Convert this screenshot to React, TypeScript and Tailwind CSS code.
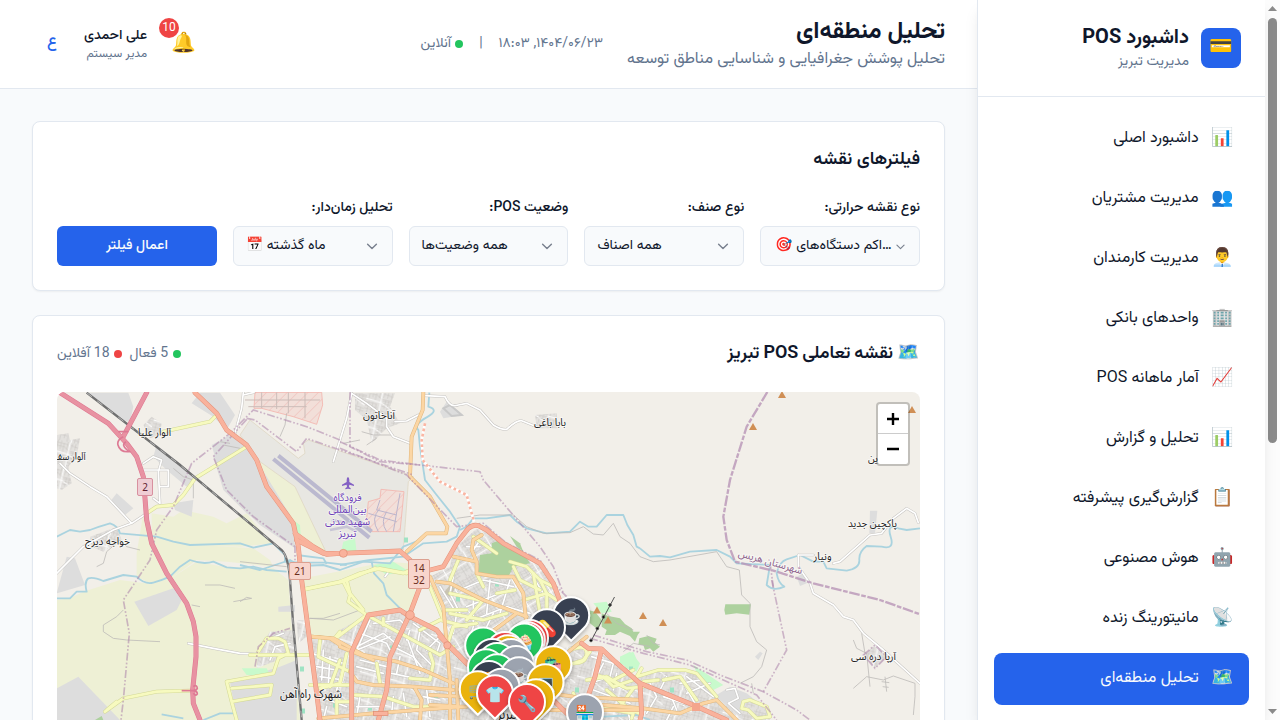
import React from "react";

const FONT = "font-['Vazirmatn','Roboto','Noto_Sans_Arabic','Noto_Sans',sans-serif]";

const NAV = [
  { icon: "📊", label: "داشبورد اصلی" },
  { icon: "👥", label: "مدیریت مشتریان" },
  { icon: "👨‍💼", label: "مدیریت کارمندان" },
  { icon: "🏢", label: "واحدهای بانکی" },
  { icon: "📈", label: "آمار ماهانه POS" },
  { icon: "📊", label: "تحلیل و گزارش" },
  { icon: "📋", label: "گزارش‌گیری پیشرفته" },
  { icon: "🤖", label: "هوش مصنوعی" },
  { icon: "📡", label: "مانیتورینگ زنده" },
  { icon: "🗺️", label: "تحلیل منطقه‌ای", active: true },
];

function Chevron({ small }: { small?: boolean }) {
  return (
    <svg className={`shrink-0 text-gray-500/90 ${small ? "mr-[1px] h-[13px] w-[13px]" : "h-4 w-4"}`} viewBox="0 0 16 16" fill="none" stroke="currentColor" strokeWidth="1.4" strokeLinecap="round" strokeLinejoin="round">
      <path d="M3.6 6.2l4.4 4.4L12.4 6.2" />
    </svg>
  );
}

function Select({ label, icon, value, truncated }: { label: string; icon?: string; value: string; truncated?: boolean }) {
  return (
    <div>
      <div className="mb-2 h-5 text-sm font-medium leading-5 text-slate-900">{label}</div>
      <div className={`flex h-10 items-center justify-between rounded-md border border-slate-200 bg-slate-50 text-sm text-slate-900 ${truncated ? "pl-[14px] pr-[11px]" : "px-3"}`}>
        <Chevron small={truncated} />
        <span className="flex items-center gap-1 whitespace-nowrap leading-5">
          <span>{value}</span>
          {icon && <span>{icon}</span>}
        </span>
      </div>
    </div>
  );
}

/* Local frames of the map sheets: every sheet is drawn at three times its size. */
const SHEETS: Record<string, string> = {
  A: "translate(40 380) scale(0.33333)",
  B: "translate(340 380) scale(0.33333)",
  C: "translate(640 300) scale(0.33333)",
  D: "translate(240 540) scale(0.33333)",
  E: "translate(570 580) scale(0.33333)",
  F: "translate(180 385) scale(0.33333)",
};

type Piece = [string, string];

const FARM: Piece[] = [
  ["A", "M335 400L400 410 430 390 520 410 560 430 620 400 660 450 700 490 600 500 450 495 335 480Z"],
  ["A", "M310 400L345 470 480 495 640 505 690 540 700 560 560 545 470 540 400 590 330 610 290 590 290 520Z"],
  ["A", "M335 612L400 590 470 545 560 562 700 565 745 600 755 740 780 1020 50 1020 50 660 90 655 130 635 240 600Z"],
  ["D", "M190 115L330 88 440 65 505 70 530 100 520 215 385 225 330 270 290 300 205 290Z"],
  ["F", "M240 230L345 305 440 500 400 500 350 440 270 320Z"],
];
const GRAY: Piece[] = [
  ["A", "M145 38L265 38 280 80 270 125 240 120Z"],
  ["A", "M480 38L540 38 585 105 560 150 520 110 455 70Z"],
  ["A", "M520 230L540 190 610 205 640 240 690 340 760 430 765 500 700 460 620 400 550 330Z"],
  ["A", "M350 195L420 250 465 295 440 320 380 270 340 230Z"],
  ["A", "M230 340L280 385 255 405 210 365Z"],
  ["A", "M400 370L460 360 455 410 405 390Z"],
  ["A", "M283 665L400 625 430 650 410 690 325 738Z"],
  ["A", "M50 925L115 890 240 1020 50 1020Z"],
  ["A", "M80 530L105 535 135 615 50 640Z"],
  ["A", "M570 905L720 860 770 840 770 1020 590 1020Z"],
  ["A", "M715 680L765 675 765 695 715 695Z"],
  ["F", "M95 180L150 150 210 185 245 250 330 390 345 490 240 420 130 310Z"],
  ["B", "M300 95L320 65 370 105 310 115Z"],
  ["C", "M690 632L712 632 705 700 688 700Z"],
  ["E", "M440 345L480 320 530 340 580 380 600 420 520 420 450 360Z"],
  ["E", "M555 230L570 215 578 220 565 240Z"],
  ["C", "M470 830L490 820 500 850 480 858Z"],
];
const AIRPORT: Piece[] = [
  ["F", "M210 105L355 220 375 205 370 175 385 165 700 275 685 290 670 495 440 505 345 305 240 230 180 150Z"],
];
const TOWN: Piece[] = [
  ["A", "M50 165L85 160 90 180 120 175 110 230 85 260 95 310 65 330 50 325Z"],
  ["A", "M310 135L335 110 365 130 360 165 330 175Z"],
  ["A", "M150 470L230 440 245 480 190 515 155 500Z"],
  ["B", "M45 40L165 40 150 80 180 130 140 145 95 190 80 120 45 90Z"],
  ["C", "M670 1065L705 1035 740 1070 705 1105Z"],
  ["B", "M585 105L650 100 655 145 590 145Z"],
  ["A", "M690 755L765 750 770 810 740 830 650 865 655 810Z"],
  ["A", "M770 720L795 720 800 770 775 790Z"],
  ["D", "M210 290L290 300 330 275 385 225 500 210 520 250 610 280 680 370 690 540 235 540Z"],
  ["B", "M0 750L90 700 200 700 300 760 380 860 560 840 720 790 800 830 900 920 900 1020 0 1020Z"],
  ["E", "M90 220L200 290 280 270 380 280 440 345 450 360 520 420 0 420 0 200Z"],
  ["E", "M510 390L540 360 590 385 600 420 520 420Z"],
];
const TOWN_NORTH: Piece[] = [
  ["B", "M340 510L410 445 530 500 620 560 660 660 560 720 450 800 380 860 340 820 300 650 270 590 330 560Z"],
];
const GREEN: Piece[] = [
  ["B", "M455 490L480 480 500 500 550 520 570 550 520 560 505 590 415 580 420 525 455 520Z"],
  ["B", "M510 468L540 490 550 515 530 500Z"],
  ["C", "M256 913L333 913 328 944 290 940 256 944 253 930Z"],
  ["E", "M95 100L115 108 150 115 165 132 185 145 190 155 210 155 203 165 195 185 180 168 150 155 135 165 105 165 110 150 95 140Z"],
  ["E", "M208 175L235 168 260 176 255 188 270 200 250 215 240 205 225 210 220 195 205 195Z"],
  ["E", "M55 90L75 95 95 120 85 150 60 130Z"],
  ["A", "M165 1020L185 1008 190 1020Z"],
];
const PARK: Piece[] = [
  ["E", "M370 255L460 315 430 330 385 290Z"],
  ["E", "M150 230L180 215 210 250 200 275 150 250Z"],
  ["E", "M70 70L110 65 125 95 95 100Z"],
  ["D", "M400 75L460 65 500 90 440 105Z"],
  ["A", "M605 865L680 865 690 885 620 885Z"],
  ["F", "M490 470L525 460 530 500 480 515Z"],
  ["F", "M330 400L360 420 362 450 350 440Z"],
  ["B", "M840 830L880 815 895 850 860 870Z"],
];
const SPOTS: [number, number][] = [[302, 669], [335, 705], [370, 708], [458, 599], [406, 540], [497, 584], [556, 614], [631, 669], [577, 690], [392, 648], [303, 711], [672, 690], [620, 700], [436, 696]];
const MILITARY: Piece[] = [
  ["F", "M225 22L425 22 428 60 410 118 340 95 245 70 222 70Z"],
  ["F", "M603 313L672 320 660 440 575 440 560 400 565 350 600 340Z"],
];
const WATER: Piece[] = [
  ["A", "M50 470L90 450 120 455 150 450Q175 440 210 430Q235 438 240 460L350 470 400 485 450 495 600 490 640 503 700 490 735 525 735 545 780 548 860 548 920 555"],
  ["A", "M50 655L90 655Q105 640 110 635L140 635Q132 605 145 595Q160 590 190 603L250 585 290 590Q315 615 340 608T390 590L420 560 450 540Q490 555 520 545L560 562 600 565 640 560 680 570 740 575"],
  ["A", "M365 1003L430 1015 M490 1020L540 1000 590 1000"],
  ["A", "M770 525L850 535 860 552"],
  ["B", "M268 38L265 80Q300 90 260 112T235 150L240 200 255 300 290 345 330 395 360 440 350 470 320 485 250 490 190 530 90 540 0 555"],
  ["B", "M360 450L380 440 400 415 440 415 510 405 530 425 560 445 620 460 690 455 720 425 745 440 770 440 800 405 850 405 862 435 880 465 890 500 900 505"],
  ["C", "M0 745L30 770 60 768 90 772 150 755 230 750 270 770 290 790 390 795 380 855Q400 875 433 860Q415 850 410 820Q418 785 440 778L480 765 520 785 550 785 560 805 620 812Q660 805 658 780T680 738L725 740Q765 750 752 710T775 685L800 690 840 685"],
  ["D", "M395 65L402 100 430 130 440 165 480 205"],
  ["D", "M0 75L60 90 150 60 180 78 250 75 300 90 370 65 450 70 490 20 540 0"],
  ["E", "M100 410L200 405 240 420"],
];
const TRACK: Piece[] = [
  ["A", "M495 615L540 615 585 625 M580 665L635 655 M455 675L480 680 M250 690L230 710 190 735 190 755 220 775 260 780 360 785 M800 715L850 715 900 700"],
  ["A", "M400 265L430 290 460 300 460 355 M600 545L740 560"],
  ["B", "M350 415L420 405 520 405 560 440 610 460 690 458 730 440 760 462 790 465 820 430 840 470 870 490 900 530"],
  ["C", "M0 770L40 785 90 780 230 755 260 800 298 810 305 885 330 910 330 980 350 1025 380 1050 365 1100 340 1130 300 1150 M335 1150L340 1180"],
  ["C", "M640 1165L680 1130 730 1140 760 1128 825 1150 M640 1020L650 1045 680 1060 690 1160 M665 1000L675 1060"],
  ["C", "M735 1130L740 1175 M725 1145L748 1148 M728 1160L746 1162 M825 1150L825 1190 820 1245"],
  ["A", "M170 560L190 550 200 515 240 480 260 500 300 510"],
  ["E", "M160 215L190 190 240 200 M110 100L140 130 190 150 M230 165L250 190 270 195"],
  ["F", "M320 85L315 120 300 155 M180 190L130 180 M120 170L150 175"],
  ["F", "M545 140L580 150 600 150 M600 150L640 150 M560 180L590 160"],
  ["B", "M10 190L60 180 M200 700L215 690"],
  ["D", "M0 185L20 172 35 175 M210 235L280 240 360 210"],
];
const MINOR: Piece[] = [
  ["A", "M60 250L90 280 150 320 200 350 275 430 320 400 M275 430L220 450 130 500 50 580"],
  ["A", "M310 250L340 230 365 240 355 275 360 370 340 355 M310 270L355 270 385 270 385 320 360 320"],
  ["A", "M445 790L520 805 600 820 650 822"],
  ["F", "M190 22L185 70 165 145 M222 22L190 30 M515 25L500 100 460 230"],
  ["F", "M515 25L560 55 620 100 620 125 640 155 690 175 M645 110L680 108 715 90"],
  ["B", "M255 47L315 50Q330 85 355 75L380 70 420 90 460 135Q485 150 500 148Q530 120 545 122L590 140"],
  ["C", "M475 765L475 800 510 850 520 880 580 915 610 950 640 960 670 1000 730 1050 840 1150"],
  ["C", "M475 765L520 765 M580 790L600 785 690 705 725 700 760 655 800 625 825 640 835 668"],
  ["D", "M435 110L450 90 490 100 M80 300L130 280 M90 360L105 320 150 310"],
  ["E", "M65 230L130 250 120 290 60 310 M70 330L180 370 M330 290L380 380 M350 290L430 350 M330 310L390 300 M350 340L420 310"],
  ["E", "M470 330L495 325 505 355 475 370 510 400"],
  ["E", "M240 310L260 350 230 400 M290 290L270 330 M300 340L320 390"],
  ["D", "M360 280L440 310 450 330 M390 240L350 330 450 290 M520 250L600 310 590 340 M600 290L560 330 M500 290L540 400 M350 320L430 280 480 320"],
  ["D", "M215 340L310 370 290 450 M230 380L290 390 M240 410L310 420 M250 330L245 420 M270 350L265 430"],
  ["B", "M360 630L430 600 520 620 M380 680L480 640 M400 720L500 680 570 700 M450 600L440 700 M510 600L480 700 M560 560L610 640 M300 620L350 700 340 760"],
  ["B", "M420 480L400 510 M380 500L420 500 M340 590L330 640 360 700 M460 700L430 760 M400 640L400 740 380 800"],
  ["D", "M350 380L430 400 M360 360L440 380 M460 320L520 350 560 400 M470 400L480 350 M350 500L420 500 M360 470L350 530 M460 470L455 520 M490 460L500 530 M550 470L600 480 M560 450L570 530 M240 470L320 500 M260 500L250 540"],
  ["D", "M510 270L500 300 M540 270L530 330 580 380 M400 250L480 240 500 260 M455 400L550 420"],
  ["E", "M100 250L80 290 M140 280L130 330 M170 380L180 420 M280 350L340 370 M250 330L320 350 M310 380L290 420"],
];
const SECONDARY: Piece[] = [
  ["A", "M370 155L510 125 525 110"],
  ["A", "M320 400L350 380 400 375 430 345 465 295 620 200"],
  ["A", "M630 825L805 825 M655 815L680 775 715 775 735 785 745 820 715 835 700 880 560 905 575 965 690 945 695 915 575 925 M575 965L590 1020"],
  ["A", "M795 627L900 605 M195 995L250 955 350 935 450 932 M200 990L230 965"],
  ["A", "M900 755L880 780"],
  ["D", "M195 148L310 125 405 85 490 100 510 90 M310 125L330 165 325 185 380 225 280 300 M380 225L500 290 600 345 640 320"],
  ["D", "M240 300L235 350 330 395 M320 340L300 430 240 445 M410 370L420 430 M210 435L330 435 M345 465L430 470 520 500 630 500 M290 480L290 530 M570 140L610 240 M600 240L540 270"],
  ["D", "M510 415L570 420 580 370 570 340 M270 440L300 360 M430 235L430 255 M615 210L680 210 M600 240L680 260 M290 485L330 485"],
  ["B", "M510 545L560 560 600 600 640 620 M520 560L540 600 600 630 M550 660L620 640 650 660 M410 730L340 740 320 800 M330 700L430 720 500 700 M470 520L400 470"],
  ["B", "M20 600L30 640 70 690 M0 605L60 580 120 565 200 580"],
  ["B", "M580 580L590 640 600 700 M600 600L620 640 620 700 M330 640L420 660 M430 660L380 720 M355 540L330 600 M410 580L430 620 M525 630L470 640"],
  ["B", "M700 940L720 980 M800 930L870 990 900 1000 M740 900L800 890 850 920 M690 810Q740 790 740 820T700 850 M820 900L880 870"],
  ["E", "M200 290L265 270 345 270 380 280 440 350 M280 300L330 290 380 360 M265 300L220 305 M190 300L130 320 100 290 M190 325L150 380"],
  ["E", "M80 285L110 295 170 325 220 320 M540 360L590 380 600 410 560 415 535 390 515 385 520 365 540 360 M105 385L190 400 185 415"],
  ["E", "M10 250L40 240 60 215 M200 290L215 265"],
];
const PRIMARY: Piece[] = [
  ["B", "M250 38L248 90 215 170 210 290 270 350 322 440 318 460 260 460 200 515"],
  ["B", "M425 465L400 480 395 510 410 545 410 580 470 590 520 590 550 640 560 740 M410 545L340 530"],
  ["B", "M270 590L310 680 320 790 330 900 330 1020"],
  ["B", "M290 605L330 610 430 660 560 710 M530 700L450 760"],
  ["D", "M215 290L280 295 370 345 470 365 550 390 640 430 M330 395L350 425 400 435 520 440 640 450 M235 535L400 520 600 505 680 500 M525 445L545 480 540 540"],
  ["A", "M815 770L870 775 900 795"],
  ["B", "M620 870L740 770 M0 800L100 840"],
  ["E", "M100 375L220 385 330 400 400 370 440 360 500 420 M0 370L60 378"],
  ["B", "M560 930L700 950 900 960 M560 990L900 990 M270 945L370 950 M270 975L370 980 M350 900L355 1020"],
];
const TRUNK: Piece[] = [
  ["A", "M465 38L530 100 560 150 620 195 650 240 680 320 760 430 775 500 785 600 830 940 840 1020"],
  ["A", "M765 460L820 500 860 523 900 520"],
  ["D", "M170 0L200 15 250 40 300 40 480 33 510 60 540 90"],
  ["D", "M540 140L510 220 450 350 440 450 415 540"],
  ["D", "M335 540L335 335 385 225 480 210 510 230 590 270 620 310 690 380"],
  ["B", "M270 570L310 560 350 490 385 445Q400 432 415 437L440 450 490 490 600 550 640 610 670 690"],
  ["E", "M35 190L55 205 95 207 130 240 210 310 370 375 470 420 M95 207L75 290 50 360 20 410 M210 310L215 400 210 420"],
  ["B", "M640 960L680 1000 M300 770L380 850"],
];
const MOTORWAY: Piece[] = [
  ["A", "M60 38L205 130 260 190 290 230 310 290 320 420 335 490 380 580 440 670 460 725 468 770 468 830 458 930 460 970 480 1020"],
  ["A", "M320 38L250 170"],
];
const RAIL: Piece[] = [["A", "M140 38L420 255 725 510Q745 530 750 600L760 740 785 1020"]];
const BORDER: Piece[] = [
  ["A", "M900 180L800 140 640 90 570 160 455 250 400 380 350 450 330 540 250 660 268 760 250 960 243 1020"],
  ["A", "M620 118L520 230 560 330 640 410 765 500 765 600"],
  ["F", "M200 100L225 105 350 200 380 160 480 195 700 270"],
  ["F", "M510 22L510 185 600 230 720 240"],
  ["B", "M0 185L120 240 240 255 420 275 430 300 600 500 640 560 670 640"],
  ["B", "M0 205L200 285 350 440 430 430 500 490 600 540 650 620 680 650"],
  ["A", "M645 860L655 800 700 760 750 745"],
  ["E", "M70 165L230 215 350 240 450 285 580 335 680 390 720 420 M60 175L220 220 360 255 460 300 560 345 620 420"],
  ["E", "M605 0L650 210 580 335"],
  ["C", "M390 790L400 860 M670 1065L705 1035 740 1070 705 1105Z"],
];
const COUNTY: Piece[] = [["C", "M382 276L320 380 270 540 250 650 260 720 285 785 400 812 520 850 720 900 838 942"]];

function Sheet({ items, ...rest }: { items: Piece[] } & React.SVGProps<SVGPathElement>) {
  return (
    <g>
      {items.map(([s, d], i) => (
        <path key={i} transform={SHEETS[s]} d={d} {...rest} />
      ))}
    </g>
  );
}

function Road({ items, fill, casing, width }: { items: Piece[]; fill: string; casing: string; width: number }) {
  return (
    <g fill="none" strokeLinejoin="round" strokeLinecap="round">
      <Sheet items={items} stroke={casing} strokeWidth={width + 3} />
      <Sheet items={items} stroke={fill} strokeWidth={width} />
    </g>
  );
}

const PINS: { x: number; y: number; c: string; e?: string }[] = [
  { x: 571.2, y: 615.3, c: "#374151", e: "☕" },
  { x: 547, y: 627.3, c: "#374151", e: "💊" },
  { x: 530, y: 638, c: "#ef4444" },
  { x: 526.8, y: 640, c: "#ef4444" },
  { x: 524.5, y: 641.5, c: "#22c55e", e: "🧁" },
  { x: 483.2, y: 645.5, c: "#22c55e", e: "🚗" },
  { x: 505, y: 650, c: "#ef4444" },
  { x: 508, y: 653.3, c: "#eab308" },
  { x: 492, y: 657, c: "#374151" },
  { x: 511, y: 657, c: "#9ca3af" },
  { x: 497, y: 661, c: "#22c55e" },
  { x: 516, y: 664, c: "#9ca3af", e: "☕" },
  { x: 553.3, y: 664.3, c: "#eab308", e: "🛍️" },
  { x: 486, y: 667.3, c: "#22c55e" },
  { x: 497, y: 672.3, c: "#22c55e" },
  { x: 519, y: 675.3, c: "#9ca3af", e: "☕" },
  { x: 489, y: 679, c: "#374151", e: "🍔" },
  { x: 545.5, y: 682.3, c: "#eab308", e: "💻" },
  { x: 501.5, y: 686.7, c: "#9ca3af" },
  { x: 477.8, y: 689.3, c: "#eab308", e: "🛒" },
  { x: 536, y: 697.3, c: "#eab308" },
  { x: 495, y: 693.3, c: "#ef4444", e: "👕" },
  { x: 527, y: 702, c: "#ef4444", e: "🔧" },
  { x: 585, y: 712.3, c: "#9ca3af", e: "🏪" },
];

const PEAKS: [number, number][] = [[782, 394.5], [753, 426.5], [912, 409.5], [643, 615.5], [663, 622.5], [597, 610], [608, 620]];

const LABELS: { x: number; y: number; w: number; t: string; s?: number; c?: string; r?: number }[] = [
  { x: 379, y: 418.5, w: 32, t: "آناخاتون" },
  { x: 550, y: 426, w: 32, t: "بابا باغی" },
  { x: 154.5, y: 436, w: 33, t: "آلوار علیا" },
  { x: 69, y: 460, w: 33, t: "آلوار سف" },
  { x: 107.5, y: 545, w: 45, t: "خواجه دیزج" },
  { x: 311, y: 697.5, w: 62, t: "شهرک راه آهن", s: 12.5 },
  { x: 872.5, y: 527, w: 49, t: "پاکچین جدید" },
  { x: 822.5, y: 560, w: 18, t: "ونیار" },
  { x: 873.5, y: 660, w: 45, t: "آرپا دره سی" },
  { x: 873, y: 461.5, w: 10, t: "ین" },
  { x: 347.5, y: 501, w: 28, t: "فرودگاه", c: "#6d3fb8" },
  { x: 347.5, y: 513, w: 38, t: "بین‌المللی", c: "#6d3fb8" },
  { x: 347.5, y: 525, w: 45, t: "شهید مدنی", c: "#6d3fb8" },
  { x: 347.5, y: 537, w: 18, t: "تبریز", c: "#6d3fb8" },
  { x: 769.5, y: 565, w: 66, t: "شهرستان هریس", c: "#8d618b", r: 16 },
  { x: 507, y: 719, w: 20, t: "تبریز", s: 16, c: "#111" },
];

function Shield({ x, y, w, h, lines, bg, edge, ink }: { x: number; y: number; w: number; h: number; lines: string[]; bg: string; edge: string; ink: string }) {
  return (
    <g>
      <rect x={x} y={y} width={w} height={h} rx="1.5" fill={bg} stroke={edge} />
      {lines.map((l, i) => (
        <text key={l} x={x + w / 2} y={y + 12.5 + i * 12} textAnchor="middle" fontSize="10" className="font-['Noto_Sans',sans-serif]" fill={ink}>
          {l}
        </text>
      ))}
    </g>
  );
}

function CityMap() {
  return (
    <svg className="block h-[328px] w-full" viewBox="57 392 863 328" preserveAspectRatio="none" direction="ltr">
      <defs>
        <pattern id="streets" width="90" height="80" patternUnits="userSpaceOnUse" patternTransform="rotate(14)">
          <rect width="90" height="80" fill="#e3e1de" />
          <path d="M0 8H38M0 17H30L44 26H90M8 0V34M18 0V26M27 5V34M38 0V22M50 30H90M50 38H90M50 46H84M58 26V52M68 26V60M78 26V52M0 44H36M0 54H40M0 63H30M10 40V80M22 40V72M33 44V80M45 60L90 66M48 70L90 74M56 60V80M66 62V80M80 64V80M48 8L86 14M52 2L50 20M62 0V20M74 0V24" stroke="#c6c3c0" strokeWidth="1.6" fill="none" />
          <path d="M0 34L46 36 90 56M44 0L46 80" stroke="#fff" strokeWidth="3" fill="none" />
        </pattern>
        <pattern id="streets-north" width="80" height="70" patternUnits="userSpaceOnUse" patternTransform="rotate(-32)">
          <rect width="80" height="70" fill="#e3e1de" />
          <path d="M0 8H36M0 16H36M0 25H80M8 0V30M17 0V30M26 0V25M46 6H80M46 14H80M54 0V30M64 0V30M72 4V30M0 44H32M0 53H40M10 36V70M20 36V60M31 36V70M44 42H80M44 50H80M44 60H76M52 36V66M62 36V70M71 36V62" stroke="#c6c3c0" strokeWidth="1.6" fill="none" />
          <path d="M0 34H80M41 0L38 70" stroke="#fff" strokeWidth="3" fill="none" />
        </pattern>
        <pattern id="hatch" width="22" height="22" patternUnits="userSpaceOnUse" patternTransform="rotate(45)">
          <rect width="22" height="22" fill="#f2dfd9" />
          <path d="M0 0V22" stroke="#f0b9b4" strokeWidth="3" />
        </pattern>
        <filter id="drop" x="-30%" y="-30%" width="160%" height="160%">
          <feDropShadow dx="0" dy="2" stdDeviation="2" floodColor="#000" floodOpacity="0.3" />
        </filter>
      </defs>
      <rect x="57" y="392" width="863" height="328" fill="#f2efe9" />
      <Sheet items={FARM} fill="#eef0d5" />
      <Sheet items={AIRPORT} fill="#e8e7e2" stroke="#ddd3bd" strokeWidth="2" />
      <Sheet items={GRAY} fill="#dddddd" />
      <Sheet items={TOWN} fill="url(#streets)" />
      <Sheet items={TOWN_NORTH} fill="url(#streets-north)" />
      <Sheet items={PARK} fill="#c8facc" />
      <Sheet items={GREEN} fill="#add19e" />
      {SPOTS.map(([x, y]) => (
        <rect key={`${x}-${y}`} x={x - 2} y={y - 2.5} width="4" height="5" fill="#9fe3c4" />
      ))}
      <path transform={SHEETS.B} d="M310 640L330 615 345 625 330 650Z" fill="#c9c4b2" />
      <Sheet items={MILITARY} fill="url(#hatch)" stroke="#f3b5ad" strokeWidth="2.5" />
      <g fill="none">
        <path transform={SHEETS.F} d="M245 22V70M290 22V72M325 22V85M375 22V100M195 45H420M205 65H380" stroke="#ccbdb9" strokeWidth="3" />
        <path transform={SHEETS.F} d="M600 345L590 375 650 390 M660 325L640 440 M595 440Q570 400 600 370 M620 440Q600 410 620 380 M565 385L650 410" stroke="#bbb5cc" strokeWidth="3" />
        <path transform={SHEETS.F} d="M295 212L575 440M280 222L568 458" stroke="#bbb9cf" strokeWidth="12" />
        <path transform={SHEETS.F} d="M455 405L560 425M450 435L500 425L530 440" stroke="#c8c5d5" strokeWidth="8" />
        <path transform={SHEETS.B} d="M310 85L330 75 365 105 335 108Z" stroke="#c9c9c9" strokeWidth="6" />
      </g>
      <Sheet items={WATER} fill="none" stroke="#aad3df" strokeWidth="5.5" strokeLinejoin="round" />
      <Sheet items={TRACK} fill="none" stroke="#bcbab7" strokeWidth="2.4" strokeLinejoin="round" />
      <Road items={MINOR} fill="#ffffff" casing="#c6c4c1" width={5} />
      <Road items={SECONDARY} fill="#f7fabf" casing="#d3d898" width={8.5} />
      <Road items={PRIMARY} fill="#fcd6a4" casing="#e0b67c" width={8.5} />
      <Sheet items={RAIL} fill="none" stroke="#707070" strokeWidth="7" />
      <Sheet items={RAIL} fill="none" stroke="#dcdcdc" strokeWidth="2" strokeDasharray="20 20" />
      <Sheet items={BORDER} fill="none" stroke="#ab82aa" strokeOpacity="0.55" strokeWidth="5" strokeDasharray="24 6 5 6 5 6" />
      <Sheet items={COUNTY} fill="none" stroke="#b895b6" strokeOpacity="0.8" strokeWidth="7" strokeDasharray="32 5 14 5" />
      <Road items={TRUNK} fill="#f9b29c" casing="#e5937b" width={11.5} />
      <g transform={SHEETS.D} fill="#f9b29c" stroke="#e08a70" strokeWidth="2">
        <circle cx="310" cy="40" r="12" />
        <circle cx="622" cy="316" r="11" />
        <circle cx="510" cy="225" r="13" />
        <rect x="400" y="515" width="44" height="12" />
      </g>
      <rect x="692" y="703" width="8" height="8" fill="#f4a58c" />
      <Road items={MOTORWAY} fill="#e892a2" casing="#de7690" width={12} />
      <path transform={SHEETS.A} d="M235 155L265 155M250 170Q230 180 234 195Q240 218 268 215Q240 195 258 185M425 932H460M460 920Q470 912 472 925Q470 932 458 932Q472 932 472 942Q468 950 460 940" fill="none" stroke="#dd7a94" strokeWidth="5" />
      <g transform={SHEETS.B} fill="none" strokeWidth="8">
        <path d="M255 130L245 180 248 240 300 305 380 345 402 425" stroke="#fff" />
        <path d="M255 130L245 180 248 240 300 305 380 345 402 425" stroke="#fab6a3" strokeDasharray="8 8" />
      </g>
      <g stroke="#555" fill="#000">
        <path d="M614.5 597L591 641" fill="none" />
        <circle cx="610" cy="605" r="1.3" />
        <circle cx="603.5" cy="617" r="1.3" />
        <circle cx="597.3" cy="628.5" r="1.3" />
        <circle cx="591" cy="640.5" r="1.3" />
      </g>
      {PEAKS.map(([x, y]) => (
        <path key={x} d={`M${x} ${y - 3.5}l4 7h-8z`} fill="#d08f55" />
      ))}
      <g transform={SHEETS.F} fill="#8461c4">
        <path d="M504 276q4 2 4 9v6l14 8v4l-14-4-1 7 5 4v3l-8-2-8 2v-3l5-4-1-7-14 4v-4l14-8v-6q0-7 4-9Z" />
      </g>
      <Shield x={137.5} y={478.5} w={15} h={17} lines={["2"]} bg="#efcdd4" edge="#d8909f" ink="#5e2030" />
      <Shield x={289.5} y={562.5} w={21} h={17} lines={["21"]} bg="#f8d5cc" edge="#dca090" ink="#6b2d1c" />
      <Shield x={408.5} y={559.5} w={21} h={29} lines={["14", "32"]} bg="#f8d5cc" edge="#dca090" ink="#6b2d1c" />
      {LABELS.map((l, i) => (
        <text
          key={i}
          x={l.x}
          y={l.y}
          textAnchor="middle"
          direction="rtl"
          fontSize={l.s ?? 10.5}
          textLength={l.w}
          lengthAdjust="spacingAndGlyphs"
          fill={l.c ?? "#222"}
          stroke="#fff"
          strokeOpacity="0.5"
          strokeWidth="2"
          paintOrder="stroke"
          transform={l.r ? `rotate(${l.r} ${l.x} ${l.y})` : undefined}
          className="font-['Noto_Sans_Arabic','Noto_Sans','DejaVu_Sans',sans-serif]"
        >
          {l.t}
        </text>
      ))}
      {PINS.map((p, i) => (
        <g key={i} transform={`translate(${p.x} ${p.y})`}>
          <path d="M0 25.4L-12.7 12.7A18 18 0 1 1 12.7 12.7Z" fill={p.c} stroke="#fff" strokeWidth="2" filter="url(#drop)" />
          {p.e && (
            <text x="0" y="6.5" textAnchor="middle" fontSize="16">
              {p.e}
            </text>
          )}
        </g>
      ))}
    </svg>
  );
}

function Sidebar() {
  return (
    <aside className="z-10 flex w-[288px] shrink-0 flex-col border-l border-slate-200 bg-white shadow-[0_10px_15px_-3px_rgba(0,0,0,0.1),0_4px_6px_-4px_rgba(0,0,0,0.1)]">
      <div className="flex h-[97px] shrink-0 items-center gap-3 border-b border-slate-200 px-6">
        <div className="flex h-10 w-10 items-center justify-center rounded-lg bg-[#2563eb] pt-[1px] text-[19px]">💳</div>
        <div>
          <div className="text-xl font-bold leading-7 text-slate-900">داشبورد POS</div>
          <div className="text-sm leading-5 text-slate-500">مدیریت تبریز</div>
        </div>
      </div>
      <nav className="flex flex-col gap-2 px-4 pt-4">
        {NAV.map((n) => (
          <div
            key={n.label}
            className={`flex h-[52px] shrink-0 items-center gap-3 rounded-lg px-4 text-base ${n.active ? "bg-[#2563eb] text-slate-50" : "text-slate-900"}`}
          >
            <span className="flex w-[22.4px] justify-center text-lg">{n.icon}</span>
            <span>{n.label}</span>
          </div>
        ))}
      </nav>
    </aside>
  );
}

function Header() {
  return (
    <header className="flex h-[89px] shrink-0 items-center justify-between border-b border-slate-200 bg-white px-8">
      <div className="flex items-center gap-6">
        <div>
          <h1 className="text-2xl font-bold leading-8 text-slate-900">تحلیل منطقه‌ای</h1>
          <p className="text-base leading-6 text-slate-500">تحلیل پوشش جغرافیایی و شناسایی مناطق توسعه</p>
        </div>
        <div className="flex items-center gap-4 text-sm text-slate-500">
          <span>۱۴۰۴/۰۶/۲۳, ۱۸:۰۳</span>
          <span>|</span>
          <span className="flex items-center gap-1">
            <span className="h-2 w-2 rounded-full bg-[#22c55e]" />
            <span>آنلاین</span>
          </span>
        </div>
      </div>
      <div className="flex items-center gap-6">
        <div className="relative text-[20px] leading-7">
          🔔
          <span className="absolute -top-3 right-[17px] flex h-5 w-5 items-center justify-center rounded-full bg-[#ef4444] text-xs leading-none text-white">10</span>
        </div>
        <div className="flex items-center gap-3">
          <div>
            <div className="text-sm font-medium leading-5 text-slate-900">علی احمدی</div>
            <div className="text-xs leading-4 text-slate-500">مدیر سیستم</div>
          </div>
          <div className="flex h-10 w-10 items-center justify-center pb-[2px] text-base font-medium text-[#2563eb]">ع</div>
        </div>
      </div>
    </header>
  );
}

const CARD = "shrink-0 rounded-lg border border-slate-200 bg-white px-6 pt-6 shadow-[0_1px_2px_0_rgba(0,0,0,0.05)]";

export default function App() {
  return (
    <div dir="rtl" className={`flex h-[720px] w-[1280px] overflow-hidden bg-slate-50 ${FONT}`}>
      <div className="flex w-[15px] shrink-0 flex-col items-center justify-between bg-[#fcfcfc] py-[6px]">
        <svg className="h-[5px] w-[9px]" viewBox="0 0 9 5"><path d="M4.5 0L9 5H0z" fill="#8b8b8b" /></svg>
        <div className="mb-auto mt-[7px] h-[425px] w-[9px] rounded-full bg-[#8b8b8b]" />
        <svg className="h-[5px] w-[9px]" viewBox="0 0 9 5"><path d="M4.5 5L9 0H0z" fill="#8b8b8b" /></svg>
      </div>
      <Sidebar />
      <div className="flex min-w-0 flex-1 flex-col">
        <Header />
        <main className="flex flex-col gap-6 px-8 pt-8">
          <section className={`h-[170px] ${CARD}`}>
            <h3 className="mb-6 text-lg font-semibold leading-7 text-slate-900">فیلترهای نقشه</h3>
            <div className="grid grid-cols-5 gap-4">
              <Select label="نوع نقشه حرارتی:" icon="🎯" value="…اکم دستگاه‌های" truncated />
              <Select label="نوع صنف:" value="همه اصناف" />
              <Select label="وضعیت POS:" value="همه وضعیت‌ها" />
              <Select label="تحلیل زمان‌دار:" icon="📅" value="ماه گذشته" />
              <div className="flex items-end">
                <button className="h-10 w-full rounded-md bg-[#2563eb] text-sm font-medium text-slate-50">اعمال فیلتر</button>
              </div>
            </div>
          </section>
          <section className={`h-[600px] ${CARD}`}>
            <div className="mb-6 flex h-7 items-center justify-between">
              <h3 className="pr-[1px] text-lg font-semibold text-slate-900 [word-spacing:-0.75px]">🗺️ نقشه تعاملی POS تبریز</h3>
              <div className="flex items-center gap-2 text-sm text-slate-500">
                <span className="flex items-center gap-[5px]"><span className="h-2 w-2 rounded-full bg-[#22c55e]" /><span>5 فعال</span></span>
                <span className="flex items-center gap-1"><span className="h-2 w-2 rounded-full bg-[#ef4444]" /><span>18 آفلاین</span></span>
              </div>
            </div>
            <div className="relative overflow-hidden rounded-t-lg">
              <CityMap />
              <div className="absolute right-[10px] top-[10px] w-[34px] rounded border-2 border-black/20 bg-white bg-clip-padding text-black">
                <div className="flex h-[30px] items-center justify-center border-b border-[#ccc]">
                  <svg className="h-3 w-3" viewBox="0 0 12 12"><path d="M6 0V12M0 6H12" stroke="currentColor" strokeWidth="2.4" /></svg>
                </div>
                <div className="flex h-[30px] items-center justify-center">
                  <svg className="h-3 w-3" viewBox="0 0 12 12"><path d="M0 6H12" stroke="currentColor" strokeWidth="2.4" /></svg>
                </div>
              </div>
            </div>
          </section>
        </main>
      </div>
    </div>
  );
}
